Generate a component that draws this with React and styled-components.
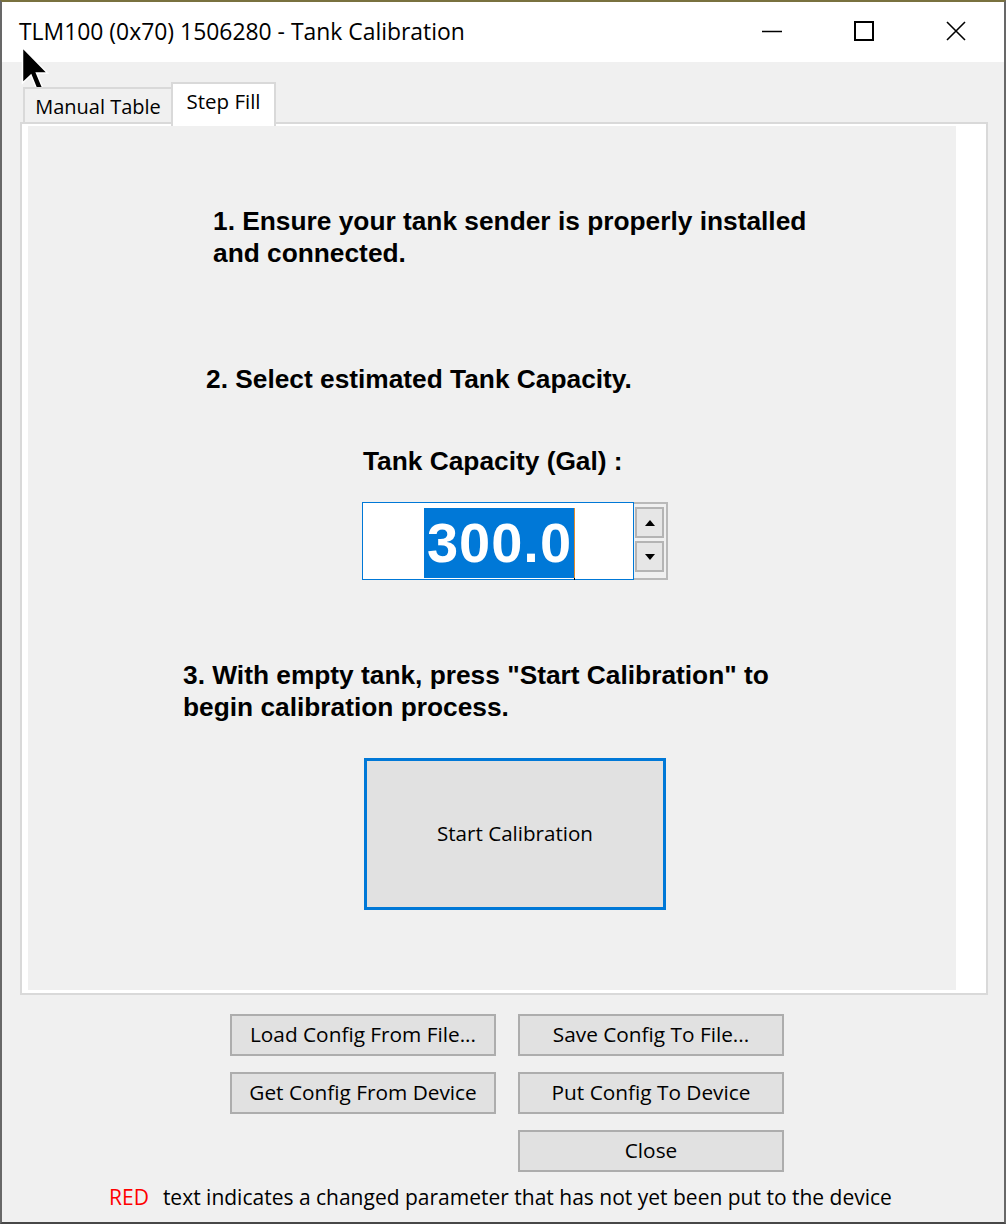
import React from "react";
import styled, { createGlobalStyle } from "styled-components";

const GlobalStyle = createGlobalStyle`
  html, body {
    margin: 0;
    padding: 0;
    background: #f0f0f0;
  }
  * {
    box-sizing: border-box;
  }
`;

const UI_FONT = `"Open Sans", "Noto Sans", sans-serif`;
const LABEL_FONT = `"Liberation Sans", Arial, sans-serif`;

// Window chrome
const Window = styled.div`
  position: relative;
  width: 1006px;
  height: 1224px;
  display: flex;
  flex-direction: column;
  background: #f0f0f0;
  border-top: 2px solid #79713f;
  border-left: 2px solid #686868;
  border-right: 2px solid #686868;
  border-bottom: 2px solid #474747;
  overflow: hidden;
`;

const TitleBar = styled.div`
  height: 60px;
  flex: none;
  display: flex;
  align-items: center;
  background: #ffffff;
  padding-left: 17px;
  padding-right: 2px;
`;

const Title = styled.div`
  flex: 1;
  font-family: ${UI_FONT};
  font-size: 22.9px;
  color: #000;
  padding-bottom: 2px;
`;

const Controls = styled.div`
  display: flex;
  height: 100%;
`;

const ControlButton = styled.div`
  width: 92px;
  height: 100%;
  display: flex;
  align-items: center;
  justify-content: center;
  padding-bottom: 3px;
`;

// Tabs
const Body = styled.div`
  flex: 1;
  display: flex;
  flex-direction: column;
  padding: 20px 16px 0 18px;
`;

const TabStrip = styled.div`
  display: flex;
  align-items: flex-end;
  height: 42px;
  padding-left: 3px;
  margin-bottom: -2px;
  position: relative;
  z-index: 1;
`;

const Tab = styled.div`
  width: ${(p) => p.$width}px;
  text-align: center;
  font-family: ${UI_FONT};
  font-size: ${(p) => (p.$active ? "20.5px" : "20px")};
  color: #000;
  border: 2px solid #d9d9d9;
  border-bottom: ${(p) => (p.$active ? "none" : "2px solid #d9d9d9")};
  background: ${(p) => (p.$active ? "#ffffff" : "#f0f0f0")};
  height: ${(p) => (p.$active ? "44px" : "37px")};
  margin-bottom: ${(p) => (p.$active ? "-2px" : "0")};
  margin-left: ${(p) => (p.$active ? "-2px" : "0")};
  padding-top: ${(p) => (p.$active ? "4px" : "5px")};
  line-height: 26px;
  white-space: nowrap;
`;

const TabPanel = styled.div`
  height: 873px;
  border: 2px solid #d9d9d9;
  background: #ffffff;
  padding: 2px 30px 3px 6px;
`;

const Page = styled.div`
  height: 100%;
  background: #f0f0f0;
  display: flex;
  flex-direction: column;
  padding-top: 79px;
`;

const Instruction = styled.div`
  font-family: ${LABEL_FONT};
  font-weight: bold;
  font-size: 26.3px;
  line-height: 32px;
  color: #000;
  margin-left: ${(p) => p.$left}px;
  margin-top: ${(p) => p.$top}px;
  white-space: pre-line;
`;

// Numeric up/down
const Spinner = styled.div`
  display: flex;
  margin-left: 334px;
  margin-top: 25px;
  height: 78px;
`;

const NumberBox = styled.div`
  width: 272px;
  height: 78px;
  border: 1px solid #0078d7;
  background: #fff;
  display: flex;
  align-items: center;
  justify-content: center;
  padding-left: 2px;
`;

const Selected = styled.span`
  position: relative;
  display: inline-block;
  height: 70px;
  margin-top: 3px;
  padding: 0 2px 0 3px;
  background: #0078d7;
  color: #fff;
  font-family: ${LABEL_FONT};
  font-weight: bold;
  font-size: 56px;
  line-height: 70px;
  letter-spacing: 1px;
`;

const Caret = styled.span`
  position: absolute;
  right: -1px;
  top: 0;
  width: 1px;
  height: 72px;
  background: #e08a2c;
  border-bottom: 2px solid #000;
`;

const SpinButtons = styled.div`
  width: 34px;
  height: 78px;
  border: 2px solid #b9b9b9;
  border-left: none;
  background: #f0f0f0;
  display: flex;
  flex-direction: column;
  gap: 3px;
  padding: 3px 2px 6px 1px;
`;

const SpinButton = styled.div`
  flex: 1;
  border: 2px solid #b4b4b4;
  background: #e6e6e6;
  display: flex;
  align-items: center;
  justify-content: center;
`;

const StartButton = styled.div`
  margin-left: 336px;
  margin-top: 35px;
  width: 302px;
  height: 152px;
  border: 3px solid #0078d7;
  background: #e1e1e1;
  display: flex;
  align-items: center;
  justify-content: center;
  font-family: ${UI_FONT};
  font-size: 20.6px;
  color: #000;
  padding-bottom: 2px;
`;

// Bottom buttons
const ButtonGrid = styled.div`
  display: grid;
  grid-template-columns: 266px 266px;
  grid-auto-rows: 42px;
  column-gap: 22px;
  row-gap: 16px;
  margin-top: 19px;
  margin-left: 210px;
`;

const DialogButton = styled.div`
  grid-column: ${(p) => p.$col || "auto"};
  border: 2px solid #adadad;
  background: #e1e1e1;
  display: flex;
  align-items: center;
  justify-content: center;
  font-family: ${UI_FONT};
  font-size: 20.8px;
  color: #000;
  padding-bottom: 2px;
  white-space: nowrap;
`;

const Footer = styled.div`
  margin-top: 11px;
  margin-left: 89px;
  font-family: ${UI_FONT};
  font-size: 21px;
  color: #000;
  white-space: nowrap;
`;

const Red = styled.span`
  color: #ff0000;
  margin-right: 14px;
`;

const Cursor = styled.svg`
  position: absolute;
  left: 19px;
  top: 44px;
`;

const Arrow = ({ up }) => (
  <svg width="10" height="6" viewBox="0 0 10 6">
    {up ? <path d="M5 0 L10 6 L0 6 Z" fill="#000" /> : <path d="M0 0 L10 0 L5 6 Z" fill="#000" />}
  </svg>
);

const App = () => {
  return (
    <>
      <GlobalStyle />
      <Window>
        <TitleBar>
          <Title>TLM100 (0x70) 1506280 - Tank Calibration</Title>
          <Controls>
            <ControlButton>
              <svg width="20" height="20" viewBox="0 0 20 20">
                <line x1="0" y1="10.5" x2="20" y2="10.5" stroke="#000" strokeWidth="1.5" />
              </svg>
            </ControlButton>
            <ControlButton>
              <svg width="20" height="20" viewBox="0 0 20 20">
                <rect x="1" y="1" width="18" height="18" fill="none" stroke="#000" strokeWidth="2" />
              </svg>
            </ControlButton>
            <ControlButton>
              <svg width="20" height="20" viewBox="0 0 20 20">
                <path d="M1 1 L19 19 M19 1 L1 19" stroke="#000" strokeWidth="1.6" />
              </svg>
            </ControlButton>
          </Controls>
        </TitleBar>

        <Body>
          <TabStrip>
            <Tab $width={150}>Manual Table</Tab>
            <Tab $active $width={105}>Step Fill</Tab>
          </TabStrip>
          <TabPanel>
            <Page>
              <Instruction $left={185} $top={0}>
                {"1. Ensure your tank sender is properly installed\nand connected."}
              </Instruction>
              <Instruction $left={178} $top={94}>
                2. Select estimated Tank Capacity.
              </Instruction>
              <Instruction $left={335} $top={50}>
                Tank Capacity (Gal) :
              </Instruction>
              <Spinner>
                <NumberBox>
                  <Selected>
                    300.0
                    <Caret />
                  </Selected>
                </NumberBox>
                <SpinButtons>
                  <SpinButton>
                    <Arrow up />
                  </SpinButton>
                  <SpinButton>
                    <Arrow />
                  </SpinButton>
                </SpinButtons>
              </Spinner>
              <Instruction $left={155} $top={79}>
                {'3. With empty tank, press "Start Calibration" to\nbegin calibration process.'}
              </Instruction>
              <StartButton>Start Calibration</StartButton>
            </Page>
          </TabPanel>

          <ButtonGrid>
            <DialogButton>Load Config From File...</DialogButton>
            <DialogButton>Save Config To File...</DialogButton>
            <DialogButton>Get Config From Device</DialogButton>
            <DialogButton>Put Config To Device</DialogButton>
            <DialogButton $col="2">Close</DialogButton>
          </ButtonGrid>

          <Footer>
            <Red>RED</Red>text indicates a changed parameter that has not yet been put to the device
          </Footer>
        </Body>

        <Cursor width="28" height="48" viewBox="0 0 28 48">
          <path
            d="M1.5 1.5 L1.5 37 L10 29 L16.5 45 L22 42.5 L15.5 27 L26.5 27 Z"
            fill="#000"
            stroke="#fff"
            strokeWidth="1.5"
            strokeLinejoin="miter"
          />
        </Cursor>
      </Window>
    </>
  );
};

export default App;
